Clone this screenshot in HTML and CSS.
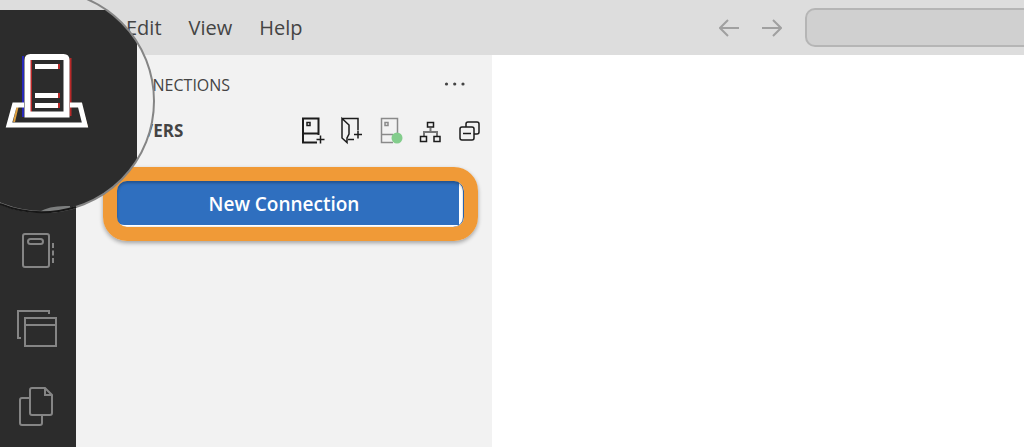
FILE: index.html
```html
<!DOCTYPE html>
<html lang="en">
<head>
<meta charset="utf-8">
<title>Connections</title>
<link rel="stylesheet" href="styles.css">
</head>
<body>
<header class="titlebar">
  <nav class="menu" aria-label="Main menu">
    <button class="menu-item" type="button">File</button>
    <button class="menu-item" type="button">Edit</button>
    <button class="menu-item" type="button">View</button>
    <button class="menu-item" type="button">Help</button>
  </nav>
  <div class="history">
    <button class="arrow" type="button" aria-label="Back"><svg width="20" height="18" viewBox="0 0 20 18"><path d="M20 9H1M9 1L1 9l8 8"/></svg></button>
    <button class="arrow" type="button" aria-label="Forward"><svg width="20" height="18" viewBox="0 0 20 18"><path d="M0 9h19M11 1l8 8-8 8"/></svg></button>
  </div>
  <input class="command" type="text" aria-label="Command center">
</header>
<div class="workbench">
  <nav class="activity" aria-label="Activity bar">
    <button class="activity-item" type="button" aria-label="Notebooks"><svg width="42" height="42" viewBox="0 0 42 42"><rect x="6" y="5" width="26" height="33" rx="2"/><rect x="11" y="10" width="15" height="5" rx="2.5"/><path d="M36 14v5M36 21.500v5M36 29v5"/></svg></button>
    <button class="activity-item" type="button" aria-label="Windows"><svg width="42" height="42" viewBox="0 0 42 42"><path d="M32 7V4H1v27h3M8 11h31v28H8zM8 18h31"/></svg></button>
    <button class="activity-item" type="button" aria-label="Explorer"><svg width="42" height="42" viewBox="0 0 42 42"><path d="M12 13H5q-2 0-2 2v23q0 2 2 2h18q2 0 2-2v-8M15 3h13l7 7v18q0 2-2 2H15q-2 0-2-2V5q0-2 2-2zM28 3v7h7"/></svg></button>
  </nav>
  <aside class="sidebar">
    <div class="heading">
      <h1 class="panel-title">CONNECTIONS</h1>
      <button class="more" type="button" aria-label="More actions"><svg width="22" height="6" viewBox="0 0 22 6"><circle cx="2.500" cy="2" r="1.600"/><circle cx="10.700" cy="2" r="1.600"/><circle cx="19" cy="2" r="1.600"/></svg></button>
    </div>
    <div class="heading section">
      <h2 class="section-title">SERVERS</h2>
      <div class="tools">
        <button class="tool" type="button" aria-label="New connection"><svg width="26" height="30" viewBox="0 0 26 30"><path d="M17.500 19V2.500H2v24h14M2 17.500h15"/><path class="thin" d="M6 6.500h3v3H6zM15.500 23.500h8M19.500 19.500v8"/></svg></button>
        <button class="tool" type="button" aria-label="New server group"><svg width="26" height="30" viewBox="0 0 26 30"><path class="thin" d="M2 2.500h16V14M2 2.500V22l5 4.500V22l2-4V9zM8 23.500h6M14 18.500h8M18 14.500v8"/></svg></button>
        <button class="tool muted" type="button" aria-label="Show active connections"><svg width="26" height="30" viewBox="0 0 26 30"><path class="thin" d="M18.500 18V2.500H2.500v24H14M2 18.500h12M6 6.500h3v3H6z"/><circle class="status" cx="18" cy="22" r="5.500"/></svg></button>
        <button class="tool" type="button" aria-label="Show hierarchy"><svg width="26" height="30" viewBox="0 0 26 30"><path class="branch" d="M12.500 12v4M6 20v-4h13v4"/><path class="thin" d="M9.500 6.500h6v4.500h-6zM2.500 20.500h6v5h-6zM16 20.500h6v5h-6z"/></svg></button>
        <button class="tool" type="button" aria-label="Collapse all"><svg width="26" height="30" viewBox="0 0 26 30"><path class="thin" d="M9 11V8q0-2 2-2h9q2 0 2 2v8q0 2-2 2h-3M5 11h10q2 0 2 2v9q0 2-2 2H5q-2 0-2-2v-9q0-2 2-2zM6 17.500h8"/></svg></button>
      </div>
    </div>
    <div class="action">
      <button class="primary" type="button">New Connection</button>
      <span class="callout"></span>
    </div>
  </aside>
  <main class="editor"></main>
</div>
<svg class="lens" width="160" height="216" viewBox="0 0 160 216" role="img" aria-label="Magnified Connections icon">
  <defs><clipPath id="glass"><circle cx="43" cy="101" r="111"/></clipPath></defs>
  <g clip-path="url(#glass)">
    <rect class="lens-panel" width="160" height="216"/>
    <path class="lens-top" d="M0 0h160v10H0zM137 10h23v34h-23z"/>
    <rect class="lens-bar" y="10" width="137" height="206"/>
    <path class="lens-next" d="M39 212q11-7 31-6v6z"/>
  </g>
  <g class="server">
    <path class="blue" d="M23 117V56"/>
    <path class="red" d="M31 58v54M70.500 58v58M59 64v5M59 93v5M59 103v5"/>
    <path class="amber" d="M80 103l7 24M14 122l4-17"/>
    <path class="base" d="M24 105H14.500L9 125h76l-5-20H70"/>
    <path class="tower" d="M27.500 114.500V60q0-3 3-3h33q3 0 3 3v54.500z"/>
    <path class="slots" d="M35 66.500h23M35 95.500h23M35 105.500h23"/>
  </g>
  <circle class="rim" cx="43" cy="101" r="111"/>
  <path class="rim-dark" d="M0 204Q37 219 76 207"/>
</svg>
</body>
</html>
```
FILE: styles.css
```css
* { box-sizing: border-box; }

body {
  margin: 0;
  min-height: 100vh;
  display: flex;
  flex-direction: column;
  position: relative;
  overflow-x: hidden;
  background: #fff;
  color: #444;
  font-family: "Open Sans", "Noto Sans", sans-serif;
}

button {
  margin: 0;
  padding: 0;
  border: 0;
  background: none;
  color: inherit;
  font: inherit;
}

svg { display: block; fill: none; }
h1, h2 { margin: 0; }

.titlebar {
  display: flex;
  align-items: center;
  height: 55px;
  padding-left: 65px;
  background: #ddd;
}

.menu { display: flex; flex: 0 0 654px; gap: 27px; }
.menu-item { font-size: 20px; line-height: 28px; }
.menu-item:first-child { width: 34px; }

.history { display: flex; gap: 23px; padding-right: 23px; }
.arrow { stroke: #a0a0a0; stroke-width: 2; }

.command {
  flex: 1;
  min-width: 0;
  height: 39px;
  border: 2px solid #b5b5b5;
  border-right: 0;
  border-radius: 10px 0 0 10px;
  background: #d0d0d0;
}

.workbench { display: flex; flex: 1; }

.activity {
  display: flex;
  flex-direction: column;
  gap: 36px;
  width: 76px;
  padding: 174px 0 18px 17px;
  background: #2c2c2c;
}

.activity-item {
  width: 42px;
  stroke: #858585;
  stroke-width: 2;
}

.sidebar {
  width: 416px;
  padding: 12px 9px 12px 10px;
  background: #f2f2f2;
}

.heading {
  display: flex;
  align-items: center;
  justify-content: space-between;
  height: 36px;
  padding: 0 17px 0 32px;
}

.section { height: 56px; padding: 0 0 0 26px; }
.panel-title { font-size: 16px; font-weight: 400; line-height: 24px; }
.section-title { font-size: 17px; font-weight: 700; line-height: 24px; }
.more svg { fill: #444; }
.tools { display: flex; gap: 13px; }
.tool { stroke: #1c1c1c; stroke-width: 2; }
.muted { stroke: #8a8a8a; }
.thin { stroke-width: 1.5; }
.branch { stroke: #777; }
.status { fill: #83cd8c; stroke: none; }

.action {
  position: relative;
  margin: 22px 21px 0 30px;
}

.primary {
  width: 100%;
  height: 45px;
  padding: 2px 7px 0 0;
  border-right: 3px solid #fff;
  border-bottom: 1px solid #fff;
  border-radius: 8px 0 0 8px;
  background: #2f6fbf;
  color: #fff;
  font-size: 19px;
  font-weight: 600;
}

.callout {
  position: absolute;
  inset: -14px -16px -15px -13px;
  border: 14px solid #f09a37;
  border-radius: 24px;
  box-shadow: 0 2px 4px #0005, inset 0 2px 3px #0004, inset -1px 0 #2f6fbf;
}

.editor { flex: 1; background: #fff; }

.lens { position: absolute; top: 0; left: 0; pointer-events: none; }
.lens-panel { fill: #f2f2f2; }
.lens-top { fill: #ddd; }
.lens-bar { fill: #2c2c2c; }
.lens-next { fill: #7c7e7e; }
.rim { stroke: #858585; stroke-width: 2; }
.rim-dark { stroke: #171717; stroke-width: 2; }
.server { stroke: #fff; stroke-width: 5; }
.tower { stroke-width: 6; }
.server .blue { stroke: #2828b8; stroke-width: 2; }
.server .red { stroke: #b82828; stroke-width: 2; }
.server .amber { stroke: #e0a040; stroke-width: 2; }
```
